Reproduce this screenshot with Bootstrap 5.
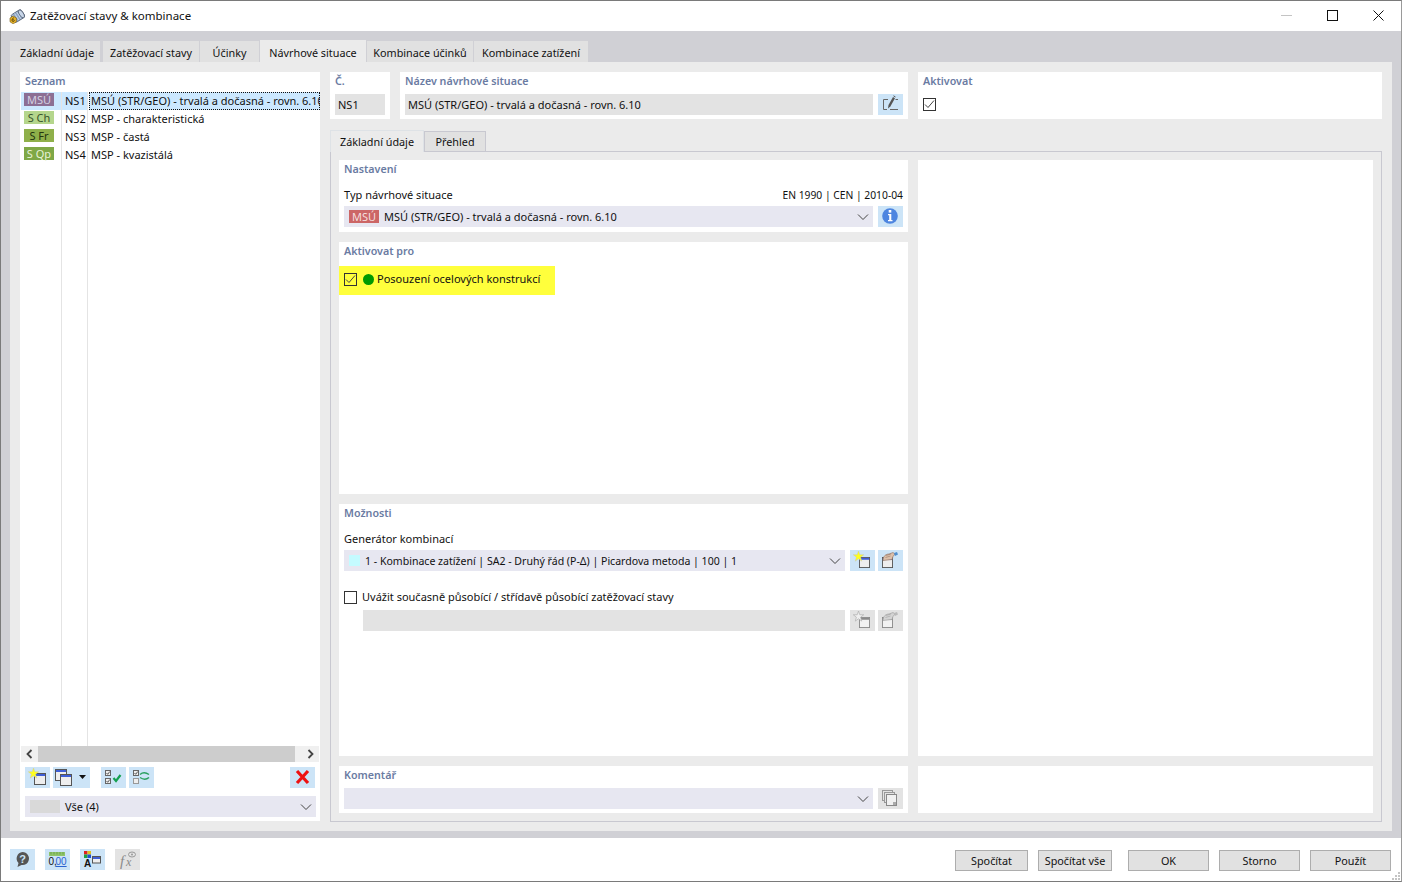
<!DOCTYPE html>
<html lang="cs">
<head>
  <meta charset="UTF-8">
  <title>Zatěžovací stavy &amp; kombinace</title>
  <link href="https://cdn.jsdelivr.net/npm/bootstrap@5.3.0/dist/css/bootstrap.min.css" rel="stylesheet">
  <style>
    html, body { height: 882px; overflow: hidden; }
    body { background: #fff; color: #111; font: 11px/18px "Noto Sans", sans-serif; }
    .dlg { width: 1402px; height: 882px; border: 1px solid #7a7a7a; border-right-color: #9a9a9a; }
    .titlebar { height: 30px; padding-left: 8px; font-size: 11.5px; gap: 5px; }
    .win-btn { width: 46px; height: 30px; padding-bottom: 2px; }
    .band { background: #d0d0d5; height: 807px; padding: 9px 9px 7px 9px; }
    .dlg-tabs { gap: 1px; height: 22px; border: 0; align-items: flex-end; }
    .dlg-tabs .nav-link { background: #e1e1e1; color: #111; border: 0; border-radius: 0; margin: 0; padding: 0; height: 21px; line-height: 24px; text-align: center; font-size: 10.8px; }
    .dlg-tabs .nav-link.active { background: #ebebeb; color: #111; height: 22px; line-height: 26px; }
    .tab-first { width: 90px; padding-left: 4px !important; }
    .tab-second { width: 96px; margin-left: 2px !important; }
    .panel { background: #ebebeb; height: 769px; padding: 10px; gap: 10px; }
    .left-pane { width: 300px; background: #fff; height: 749px; padding-left: 1px; }
    .sec-title { height: 18px; color: #6a7ba2; font-weight: 600; font-size: 10.7px; line-height: 18px; }
    .cols { height: 654px; margin-top: 2px; }
    .col-badge { width: 41px; border-right: 1px solid #e4e4e4; }
    .col-no { width: 26px; border-right: 1px solid #e4e4e4; }
    .col-name { width: 232px; overflow: hidden; white-space: nowrap; }
    .cell { height: 18px; line-height: 18px; padding-left: 3px; display: flow-root; }
    .cell.sel { background: #cce8ff; }
    .col-name .cell.sel { outline: 1px dotted #111; outline-offset: -1px; padding-left: 2px; margin-left: 1px; }
    .tag { display: block; width: 30px; height: 13px; margin-top: 1px; font-size: 11px; line-height: 13px; text-align: center; }
    .tag-msu { background: #8c6f94; color: #d4d0e2; }
    .tag-ch { background: #b5d68c; color: #38542a; }
    .tag-fr { background: #8fb04a; color: #24350e; }
    .tag-qp { background: #7fa846; color: #e8f2d8; }
    .scrollb { height: 16px; background: #f0f0f0; margin-right: 1px; }
    .scrollb .thumb { width: 257px; height: 16px; background: #cdcdcd; margin: 0 0 0 17px; }
    .scrollb svg { position: absolute; top: 3px; }
    .tbar { height: 21px; margin: 5px 5px 8px 4px; gap: 3px; }
    .ib { width: 25px; height: 21px; background: #cce4f7; border: 0; padding: 0; display: block; flex: none; border-radius: 0; }
    .ib svg { display: block; }
    .ib.off { background: #e3e3e3; }
    .ib.wide { width: 37px; }
    .combo { background: #e7e7f1; height: 21px; padding: 0 4px 0 5px; }
    .combo .chev { margin-left: auto; flex: none; }
    .tile { background: #fff; padding: 0 5px; }
    .tile-no { width: 60px; height: 47px; }
    .tile-name { width: 508px; height: 47px; }
    .tile-act { width: 464px; height: 47px; }
    .top-row { gap: 10px; }
    .ro { background: #e3e3e3; height: 21px; line-height: 21px; padding: 0 3px; }
    .mt4px { margin-top: 4px; }
    .gap5 { gap: 5px; }
    .inner-tabs { margin-top: 11px; height: 21px; gap: 0; }
    .inner-tabs .nav-link { height: 20px; line-height: 20px; border: 1px solid #c8c8d0; border-bottom: 0; background: #e1e1e1; width: 62px; }
    .inner-tabs .nav-link.active { background: #ebebeb; height: 22px; line-height: 22px; width: 94px; margin-bottom: -1px; position: relative; z-index: 1; }
    .pane { border: 1px solid #c8c8d0; width: 1052px; height: 671px; padding: 8px; gap: 10px; }
    .pane-l { width: 569px; gap: 10px; }
    .pane-r { width: 455px; gap: 10px; }
    .blank { background: #fff; }
    .fld-label { margin-top: 8px; height: 18px; margin-bottom: 2px; }
    .txt-code { font-size: 10.3px; }
    .txt-gen { font-size: 10.55px; }
    .hl { background: #ffff3c; width: 216px; height: 29px; margin: 6px 0 0 -5px; padding: 0 0 3px 5px; gap: 6px; }
    .dot { width: 11px; height: 11px; background: #009a00; border-radius: 50%; margin-right: -3px; }
    .chk.form-check-input { width: 13px; height: 13px; margin: 0; flex: none; border: 1px solid #333; border-radius: 0; background-color: transparent; }
    .chk.form-check-input:checked { background-color: transparent; border-color: #333; background-image: url("data:image/svg+xml,%3csvg xmlns='http://www.w3.org/2000/svg' viewBox='0 0 13 13'%3e%3cpath fill='none' stroke='%23444' stroke-width='1' d='M2 6.500l3 3 6-7'/%3e%3c/svg%3e"); background-size: 13px; }
    .swatch { width: 11px; height: 11px; background: #c4fbff; margin-right: 5px; }
    .tag-red { width: 30px; height: 13px; background: #cc6666; color: #f4dede; line-height: 13px; text-align: center; margin-right: 5px; }
    .grey-sw { width: 30px; height: 13px; background: #d9d9d9; margin-right: 5px; }
    .foot { height: 43px; padding: 11px 10px 0 9px; position: relative; }
    .foot .ib { margin-right: 10px; }
    .act { background: #e1e1e1; border: 1px solid #adadad; border-radius: 0; height: 21px; padding: 0; margin-top: 1px; color: #111; font-size: 10.8px; line-height: 19px; }
    .act-s { width: 73px; }
    .act-m { width: 74px; }
    .act-l { width: 81px; }
    .act-gap { margin-right: 10px; }
    .act-gap2 { margin-right: 16px; }
    .grip { position: absolute; right: 1px; bottom: 1px; }
  </style>
</head>
<body>
  <svg width="0" height="0" class="position-absolute">
    <defs>
      <symbol id="chev" viewBox="0 0 12 8"><path d="M1 1.500l5 5 5-5" fill="none" stroke="#444" stroke-width="1"/></symbol>
      <symbol id="win" viewBox="0 0 12 12"><rect x=".5" y=".5" width="11" height="11" fill="#eee" stroke="#555"/><rect x="1" y="1" width="10" height="2" fill="#3f5fd6"/></symbol>
      <symbol id="win-off" viewBox="0 0 12 12"><rect x=".5" y=".5" width="11" height="11" fill="#f2f2f2" stroke="#8a8a8a"/><rect x="1" y="1" width="10" height="2" fill="#8a8a8a"/></symbol>
      <symbol id="star" viewBox="0 0 12 12"><path d="M6 0l1.400 4.100h4.300L8.300 6.700 9.500 11 6 8.500 2.500 11l1.200-4.300L.3 4.100h4.300z" fill="#ffff1e" stroke="#c8c8a0" stroke-width=".5"/></symbol>
      <symbol id="star-off" viewBox="0 0 12 12"><path d="M6 0l1.400 4.100h4.300L8.300 6.700 9.500 11 6 8.500 2.500 11l1.200-4.300L.3 4.100h4.300z" fill="#efefef" stroke="#aaa" stroke-width=".7"/></symbol>
      <symbol id="hand" viewBox="0 0 15 9"><path d="M0 8.500C0 4 3 2 6 2l4-1.500L12 2 10 4.500 9 7.500z" fill="#dcc0aa" stroke="#8a6a5a" stroke-width=".6"/><path d="M3 3.500l5-1.500M2.500 5.500l5-1.500" stroke="#8a6a5a" stroke-width=".5"/><path d="M11 1l3-1 1 2.500-3 1.500z" fill="#4f8fd0"/></symbol>
      <symbol id="hand-off" viewBox="0 0 15 9"><path d="M0 8.500C0 4 3 2 6 2l4-1.500L12 2 10 4.500 9 7.500z" fill="#d4d4d4" stroke="#999" stroke-width=".6"/><path d="M3 3.500l5-1.500M2.500 5.500l5-1.500" stroke="#999" stroke-width=".5"/><path d="M11 1l3-1 1 2.500-3 1.500z" fill="#bbb"/></symbol>
      <symbol id="mini" viewBox="0 0 6 6"><rect x=".5" y=".5" width="5" height="5" fill="#eee" stroke="#666"/><path d="M1.500 3l1.200 1.300L4.800 1.500" fill="none" stroke="#333" stroke-width=".8"/></symbol>
    </defs>
  </svg>

  <div class="dlg d-flex flex-column">
    <div class="titlebar d-flex align-items-center">
      <svg width="16" height="16" viewBox="0 0 16 16"><g transform="rotate(-32 9 8)"><rect x="3" y="3.500" width="12" height="9" rx="2" fill="#8ea6c6" stroke="#4a5568" stroke-width=".7"/><ellipse cx="13" cy="8" rx="2" ry="4.500" fill="#c8d6e8" stroke="#4a5568" stroke-width=".7"/><path d="M5 4v8M7.500 4v8M10 4v8" stroke="#dfe7f2" stroke-width=".7"/></g><path d="M1 10l3.200-2 3.200 2v3.800l-3.200 2-3.200-2z" fill="#eab52a" stroke="#6b5310" stroke-width=".6"/><path d="M5 9.800C3.500 10 3 11 3 12.500c0 1.300 2.300 1.300 2.300 0 0-1-1.600-1-2.200-.3" fill="none" stroke="#4a3a08" stroke-width=".8"/></svg>
      <span>Zatěžovací stavy &amp; kombinace</span>
      <div class="ms-auto d-flex">
        <div class="win-btn d-flex align-items-center justify-content-center"><svg width="11" height="11" viewBox="0 0 11 11"><path d="M0 5.500h11" stroke="#c4c4c4"/></svg></div>
        <div class="win-btn d-flex align-items-center justify-content-center"><svg width="11" height="11" viewBox="0 0 11 11"><rect x=".5" y=".5" width="10" height="10" fill="none" stroke="#111"/></svg></div>
        <div class="win-btn d-flex align-items-center justify-content-center"><svg width="11" height="11" viewBox="0 0 11 11"><path d="M.5.500l10 10M10.500.500l-10 10" stroke="#111"/></svg></div>
      </div>
    </div>

    <div class="band">
      <ul class="nav nav-tabs dlg-tabs">
        <li class="nav-item"><a class="nav-link tab-first" href="#">Základní údaje</a></li>
        <li class="nav-item"><a class="nav-link tab-second" href="#">Zatěžovací stavy</a></li>
        <li class="nav-item"><a class="nav-link" style="width:59px" href="#">Účinky</a></li>
        <li class="nav-item"><a class="nav-link active" style="width:106px" href="#">Návrhové situace</a></li>
        <li class="nav-item"><a class="nav-link" style="width:106px" href="#">Kombinace účinků</a></li>
        <li class="nav-item"><a class="nav-link" style="width:114px" href="#">Kombinace zatížení</a></li>
      </ul>

      <div class="panel d-flex">
        <div class="left-pane d-flex flex-column">
          <div class="sec-title ps-1">Seznam</div>
          <div class="cols d-flex">
            <div class="col-badge">
              <div class="cell sel"><span class="tag tag-msu">MSÚ</span></div>
              <div class="cell"><span class="tag tag-ch">S Ch</span></div>
              <div class="cell"><span class="tag tag-fr">S Fr</span></div>
              <div class="cell"><span class="tag tag-qp">S Qp</span></div>
            </div>
            <div class="col-no">
              <div class="cell sel">NS1</div>
              <div class="cell">NS2</div>
              <div class="cell">NS3</div>
              <div class="cell">NS4</div>
            </div>
            <div class="col-name">
              <div class="cell sel">MSÚ (STR/GEO) - trvalá a dočasná - rovn. 6.10</div>
              <div class="cell">MSP - charakteristická</div>
              <div class="cell">MSP - častá</div>
              <div class="cell">MSP - kvazistálá</div>
            </div>
          </div>
          <div class="scrollb position-relative">
            <svg style="left:5px" width="7" height="10" viewBox="0 0 7 10"><path d="M5.500 1L1.500 5l4 4" fill="none" stroke="#444" stroke-width="1.800"/></svg>
            <div class="thumb"></div>
            <svg style="right:5px" width="7" height="10" viewBox="0 0 7 10"><path d="M1.500 1l4 4-4 4" fill="none" stroke="#444" stroke-width="1.800"/></svg>
          </div>
          <div class="tbar d-flex">
            <button class="btn ib"><svg width="25" height="21"><use href="#win" x="9" y="6" width="12" height="12"/><use href="#star" x="3" y="1" width="11" height="11"/></svg></button>
            <button class="btn ib wide"><svg width="37" height="21"><use href="#win" x="2" y="2" width="12" height="12"/><use href="#win" x="7" y="7" width="12" height="12"/><path d="M26 8h7l-3.500 4z" fill="#111"/></svg></button>
            <button class="btn ib ms-2"><svg width="25" height="21"><use href="#mini" x="4" y="3" width="6" height="6"/><use href="#mini" x="4" y="11" width="6" height="6"/><path d="M12.500 11l2.500 3 4.500-6" fill="none" stroke="#14a050" stroke-width="2.200"/></svg></button>
            <button class="btn ib"><svg width="25" height="21"><use href="#mini" x="4" y="3" width="6" height="6"/><rect x="4.500" y="11.500" width="5" height="5" fill="#eee" stroke="#999"/><path d="M11 7.500c3-2.500 6-2 9 0M20 10.500c-3 2.500-6 2-9 0" fill="none" stroke="#2aa060" stroke-width="1.500"/></svg></button>
            <button class="btn ib ms-auto"><svg width="25" height="21"><path d="M7 4l11 12M18 4L7 16" stroke="#ee1111" stroke-width="3.200"/></svg></button>
          </div>
          <div class="combo d-flex align-items-center mx-1"><span class="grey-sw"></span>Vše (4)<svg class="chev" width="12" height="8"><use href="#chev"/></svg></div>
        </div>

        <div class="right-pane d-flex flex-column">
          <div class="d-flex top-row">
            <div class="tile tile-no">
              <div class="sec-title">Č.</div>
              <div class="ro mt4px">NS1</div>
            </div>
            <div class="tile tile-name">
              <div class="sec-title">Název návrhové situace</div>
              <div class="d-flex gap5 mt4px">
                <div class="ro flex-grow-1">MSÚ (STR/GEO) - trvalá a dočasná - rovn. 6.10</div>
                <button class="btn ib"><svg width="25" height="21"><path d="M10 5.500H5.500v10H9M12 15.500h8M17.500 5.500h2.500" fill="none" stroke="#666"/><path d="M10 14.500l.5-3.500 4.500-8 2 1.200-4.500 8z" fill="#555"/><path d="M15.500 1.800l2 1.200" stroke="#555"/></svg></button>
              </div>
            </div>
            <div class="tile tile-act">
              <div class="sec-title">Aktivovat</div>
              <input class="form-check-input chk d-block" style="margin-top:8px" type="checkbox" checked aria-label="Aktivovat">
            </div>
          </div>

          <ul class="nav nav-tabs dlg-tabs inner-tabs">
            <li class="nav-item"><a class="nav-link active" href="#">Základní údaje</a></li>
            <li class="nav-item"><a class="nav-link" href="#">Přehled</a></li>
          </ul>

          <div class="pane d-flex">
            <div class="pane-l d-flex flex-column">
              <div class="tile" style="height:72px">
                <div class="sec-title">Nastavení</div>
                <div class="fld-label d-flex justify-content-between"><span>Typ návrhové situace</span><span class="txt-code">EN 1990 | CEN | 2010-04</span></div>
                <div class="d-flex gap5">
                  <div class="combo d-flex align-items-center flex-grow-1"><span class="tag-red">MSÚ</span>MSÚ (STR/GEO) - trvalá a dočasná - rovn. 6.10<svg class="chev" width="12" height="8"><use href="#chev"/></svg></div>
                  <button class="btn ib"><svg width="25" height="21"><circle cx="12" cy="10" r="7.800" fill="#4d85e0"/><rect x="10.700" y="4" width="2.600" height="2.600" fill="#fff"/><path d="M10 8h3.300v6h1.200v1.200H10V14h1.200V9.200H10z" fill="#fff"/></svg></button>
                </div>
              </div>
              <div class="tile" style="height:252px">
                <div class="sec-title">Aktivovat pro</div>
                <div class="hl d-flex align-items-center">
                  <input class="form-check-input chk" type="checkbox" checked aria-label="Posouzení">
                  <span class="dot"></span>
                  <span>Posouzení ocelových konstrukcí</span>
                </div>
              </div>
              <div class="tile" style="height:252px">
                <div class="sec-title">Možnosti</div>
                <div class="fld-label">Generátor kombinací</div>
                <div class="d-flex gap5 align-items-center">
                  <div class="combo d-flex align-items-center flex-grow-1 txt-gen"><span class="swatch"></span>1 - Kombinace zatížení | SA2 - Druhý řád (P-Δ) | Picardova metoda | 100 | 1<svg class="chev" width="12" height="8"><use href="#chev"/></svg></div>
                  <div class="d-flex" style="gap:3px">
                    <button class="btn ib"><svg width="25" height="21"><use href="#win" x="9" y="7" width="11" height="11"/><use href="#star" x="3" y="1" width="11" height="11"/></svg></button>
                    <button class="btn ib"><svg width="25" height="21"><use href="#win" x="4" y="7" width="11" height="11"/><use href="#hand" x="5" y="2" width="15" height="9"/></svg></button>
                  </div>
                </div>
                <div class="d-flex align-items-center" style="gap:5px;margin-top:17px;height:18px">
                  <input class="form-check-input chk" type="checkbox" aria-label="Uvážit">
                  <span>Uvážit současně působící / střídavě působící zatěžovací stavy</span>
                </div>
                <div class="d-flex gap5 align-items-center" style="margin-top:4px">
                  <div class="ro flex-grow-1" style="margin-left:19px"></div>
                  <div class="d-flex" style="gap:3px">
                    <button class="btn ib off"><svg width="25" height="21"><use href="#win-off" x="9" y="7" width="11" height="11"/><use href="#star-off" x="3" y="1" width="11" height="11"/></svg></button>
                    <button class="btn ib off"><svg width="25" height="21"><use href="#win-off" x="4" y="7" width="11" height="11"/><use href="#hand-off" x="5" y="2" width="15" height="9"/></svg></button>
                  </div>
                </div>
              </div>
              <div class="tile" style="height:47px">
                <div class="sec-title">Komentář</div>
                <div class="d-flex gap5 mt4px">
                  <div class="combo d-flex align-items-center flex-grow-1"><svg class="chev" width="12" height="8"><use href="#chev"/></svg></div>
                  <button class="btn ib off"><svg width="25" height="21"><rect x="4.500" y="2.500" width="10" height="10" fill="#e3e3e3" stroke="#999"/><rect x="6.500" y="4.500" width="10" height="10" fill="#e3e3e3" stroke="#999"/><rect x="8.500" y="6.500" width="10" height="11" fill="#f0f0f0" stroke="#888"/><rect x="15" y="14" width="3" height="3" fill="#aaa"/></svg></button>
                </div>
              </div>
            </div>
            <div class="pane-r d-flex flex-column">
              <div class="blank" style="height:596px"></div>
              <div class="blank" style="height:47px"></div>
            </div>
          </div>
        </div>
      </div>
    </div>

    <div class="foot d-flex">
      <button class="btn ib"><svg width="25" height="21"><path d="M12.500 3a6.500 6.500 0 0 1 6 9c-1 3-4 4.500-7 4l-4 2 1-4a6.500 6.500 0 0 1 4-11z" fill="#555"/><text x="12.700" y="14" font-size="11" font-weight="700" text-anchor="middle" fill="#cce4f7" font-family="Liberation Sans, sans-serif">?</text></svg></button>
      <button class="btn ib"><svg width="25" height="21"><rect x="4" y="3" width="16" height="4" fill="#8fc46a"/><path d="M6 3v2.500M9 3v2.500M12 3v2.500M15 3v2.500M18 3v2.500" stroke="#5c9a3c" stroke-width=".7"/><text x="3.500" y="16" font-size="10" font-family="Liberation Sans, sans-serif" fill="#111">0,</text><text x="10.500" y="16" font-size="10" font-family="Liberation Sans, sans-serif" fill="#2a62d0" text-decoration="underline">00</text></svg></button>
      <button class="btn ib"><svg width="25" height="21"><rect x="4" y="2" width="3.500" height="3.500" fill="#e02020"/><rect x="7.500" y="2" width="3.500" height="3.500" fill="#e0c020"/><rect x="4" y="5.500" width="3.500" height="3.500" fill="#20a040"/><rect x="7.500" y="5.500" width="3.500" height="3.500" fill="#2050d0"/><text x="7.500" y="18" font-size="10" font-weight="700" text-anchor="middle" font-family="Liberation Sans, sans-serif" fill="#111">A</text><rect x="12.500" y="7.500" width="8" height="6.500" fill="#eee" stroke="#555"/><rect x="13" y="8" width="7" height="2" fill="#3f5fd6"/></svg></button>
      <button class="btn ib off"><svg width="25" height="21"><text x="5" y="17" font-size="15" font-style="italic" font-family="Liberation Serif, serif" fill="#8a8a8a">f</text><text x="11" y="17" font-size="12" font-style="italic" font-family="Liberation Serif, serif" fill="#8a8a8a">x</text><ellipse cx="17" cy="5.500" rx="3.500" ry="2.500" fill="none" stroke="#999"/><circle cx="17" cy="5.500" r="1" fill="#999"/></svg></button>
      <div class="ms-auto d-flex">
        <button class="btn act act-s act-gap">Spočítat</button>
        <button class="btn act act-m act-gap2">Spočítat vše</button>
        <button class="btn act act-l act-gap">OK</button>
        <button class="btn act act-l act-gap">Storno</button>
        <button class="btn act act-l">Použít</button>
      </div>
      <svg class="grip" width="9" height="9" viewBox="0 0 9 9"><path d="M7 1h2v2H7zM4 4h2v2H4zM7 4h2v2H7zM1 7h2v2H1zM4 7h2v2H4zM7 7h2v2H7z" fill="#c4c4c4"/></svg>
    </div>
  </div>
</body>
</html>
